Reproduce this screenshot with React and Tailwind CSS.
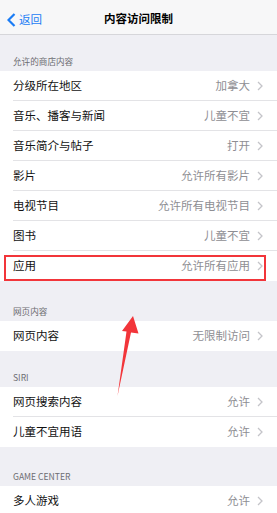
import React from 'react';

const font = { fontFamily: '"Noto Sans CJK SC", "Noto Sans", sans-serif' };

const sections = [
  {
    title: '允许的商店内容',
    header: 'h-[36px]',
    rows: [
      ['分级所在地区', '加拿大'],
      ['音乐、播客与新闻', '儿童不宜'],
      ['音乐简介与帖子', '打开'],
      ['影片', '允许所有影片'],
      ['电视节目', '允许所有电视节目'],
      ['图书', '儿童不宜'],
      ['应用', '允许所有应用', true],
    ],
  },
  { title: '网页内容', header: 'h-[40px]', rows: [['网页内容', '无限制访问']] },
  {
    title: 'SIRI',
    header: 'h-[36px]',
    rows: [
      ['网页搜索内容', '允许'],
      ['儿童不宜用语', '允许'],
    ],
  },
  { title: 'GAME CENTER', header: 'h-[39px]', rows: [['多人游戏', '允许']] },
];

function Chevron() {
  return (
    <svg width="6" height="10" viewBox="0 0 6 10" className="ml-[7px] shrink-0">
      <polyline points="1,1 5,5 1,9" fill="none" stroke="#c4c4c9" strokeWidth="1.3" />
    </svg>
  );
}

function Row({ label, value, last, marked }) {
  return (
    <div className="relative bg-white pl-[13px]">
      <div className={`flex h-[30px] items-center pr-[14px] ${last ? '' : 'border-b border-[#e3e3e6]'}`}>
        <span className="flex-1 text-[11.5px] text-[#111]">{label}</span>
        <span className="text-[11.5px] text-[#8e8e93]">{value}</span>
        <Chevron />
      </div>
      {marked && (
        <div className="absolute left-[4px] top-[4px] h-[26px] w-[262px] border-2 border-[#f2353a]" />
      )}
    </div>
  );
}

export default function App() {
  return (
    <div className="relative h-[513px] w-[277px] overflow-hidden bg-[#efeff4]" style={font}>
      <div className="relative flex h-[35px] items-center justify-center border-b border-[#d6d6da] bg-[#f7f7f8] pt-[3px]">
        <div className="absolute left-[7px] top-[13px] flex items-center">
          <svg width="9" height="14" viewBox="0 0 9 14">
            <polyline points="7.5,1 1.5,7 7.5,13" fill="none" stroke="#1a7cf5" strokeWidth="2.2" />
          </svg>
          <span className="ml-[3px] text-[11.5px] leading-none text-[#1a7cf5]">返回</span>
        </div>
        <span className="text-[11.5px] font-bold text-black">内容访问限制</span>
      </div>

      {sections.map((s) => (
        <div key={s.title}>
          <div className={`flex ${s.header} items-end px-[13px] pb-[5px] text-[8.6px] leading-[10px] text-[#6d6d72]`}>
            {s.title}
          </div>
          {s.rows.map(([label, value, marked], i) => (
            <Row key={label + i} label={label} value={value} marked={marked} last={i === s.rows.length - 1} />
          ))}
        </div>
      ))}

      <svg className="pointer-events-none absolute left-0 top-0" width="277" height="513">
        <polygon points="117.5,396 126.5,331.5 122,331 133,316 138.5,333.5 131,332.5" fill="#f2353a" />
      </svg>
    </div>
  );
}
